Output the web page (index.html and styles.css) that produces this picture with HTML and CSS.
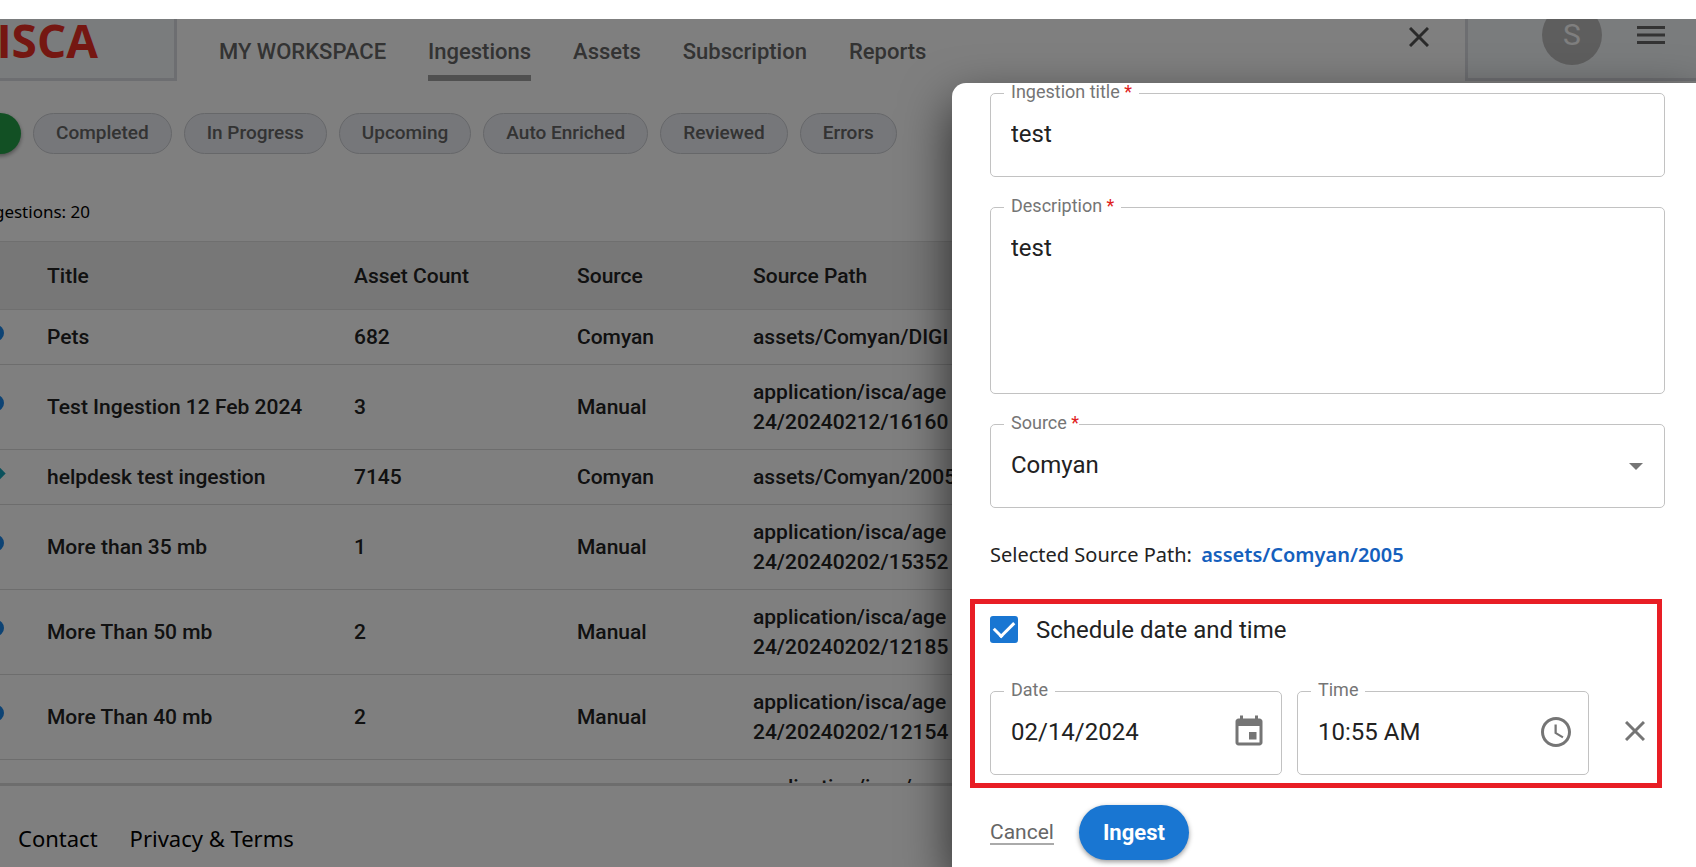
FILE: index.html
```html
<!DOCTYPE html>
<html lang="en">
<head>
<meta charset="utf-8">
<title>ISCA - Ingestions</title>
<link rel="stylesheet" href="styles.css">
</head>
<body>
<div class="app">
  <header class="topbar">
    <a class="logo" href="#">ISCA</a>
    <nav class="nav">
      <a href="#">MY WORKSPACE</a>
      <a href="#" class="active">Ingestions</a>
      <a href="#">Assets</a>
      <a href="#">Subscription</a>
      <a href="#">Reports</a>
    </nav>
    <button class="icon-btn close-search" aria-label="Close">
      <svg width="20" height="20" viewBox="0 0 20 20"><path d="M1 1L19 19M19 1L1 19" stroke="currentColor" stroke-width="3" fill="none"/></svg>
    </button>
    <div class="account">
      <span class="avatar">S</span>
      <button class="icon-btn" aria-label="Menu">
        <svg width="28" height="18" viewBox="0 0 28 18"><path d="M0 1.5H28M0 9H28M0 16.5H28" stroke="currentColor" stroke-width="3"/></svg>
      </button>
    </div>
  </header>

  <main class="content">
    <div class="chips">
      <button class="chip chip-all" aria-label="All"></button>
      <button class="chip">Completed</button>
      <button class="chip">In Progress</button>
      <button class="chip">Upcoming</button>
      <button class="chip">Auto Enriched</button>
      <button class="chip">Reviewed</button>
      <button class="chip">Errors</button>
    </div>
    <p class="total"><span>Ingestions: 20</span></p>
    <div class="table-wrap">
      <table class="grid">
        <colgroup><col class="c-icon"><col class="c-title"><col class="c-count"><col class="c-source"><col></colgroup>
        <thead>
          <tr><th></th><th>Title</th><th>Asset Count</th><th>Source</th><th>Source Path</th></tr>
        </thead>
        <tbody>
          <tr><td><i class="dot"></i></td><td>Pets</td><td>682</td><td>Comyan</td><td>assets/Comyan/DIGI</td></tr>
          <tr><td><i class="dot"></i></td><td>Test Ingestion 12 Feb 2024</td><td>3</td><td>Manual</td><td>application/isca/age<br>24/20240212/16160</td></tr>
          <tr><td><i class="diamond"></i></td><td>helpdesk test ingestion</td><td>7145</td><td>Comyan</td><td>assets/Comyan/2005</td></tr>
          <tr><td><i class="dot"></i></td><td>More than 35 mb</td><td>1</td><td>Manual</td><td>application/isca/age<br>24/20240202/15352</td></tr>
          <tr><td><i class="dot"></i></td><td>More Than 50 mb</td><td>2</td><td>Manual</td><td>application/isca/age<br>24/20240202/12185</td></tr>
          <tr><td><i class="dot"></i></td><td>More Than 40 mb</td><td>2</td><td>Manual</td><td>application/isca/age<br>24/20240202/12154</td></tr>
          <tr><td></td><td></td><td></td><td></td><td>application/isca/age</td></tr>
        </tbody>
      </table>
    </div>
  </main>

  <footer class="footer">
    <a href="#">Contact</a>
    <a href="#">Privacy &amp; Terms</a>
  </footer>

  <div class="backdrop"></div>

  <form class="drawer">
    <fieldset class="field">
      <legend><label for="title">Ingestion title <b>*</b></label></legend>
      <input id="title" type="text" value="test">
    </fieldset>
    <fieldset class="field">
      <legend><label for="desc">Description <b>*</b></label></legend>
      <textarea id="desc">test</textarea>
    </fieldset>
    <fieldset class="field field-select">
      <legend><label for="source">Source <b>*</b></label></legend>
      <select id="source"><option>Comyan</option></select>
      <svg class="caret" width="14" height="7" viewBox="0 0 14 7"><path d="M0 0H14L7 7Z" fill="currentColor"/></svg>
    </fieldset>
    <p class="path">Selected Source Path: <a href="#">assets/Comyan/2005</a></p>

    <section class="schedule">
      <label class="check"><input type="checkbox" checked>Schedule date and time</label>
      <div class="when">
        <fieldset class="field">
          <legend><label for="date">Date</label></legend>
          <input id="date" type="text" value="02/14/2024">
          <button type="button" class="icon-btn" aria-label="Choose date">
            <svg width="36" height="36" viewBox="0 0 24 24"><path fill="currentColor" d="M17 12h-5v5h5v-5zM16 1v2H8V1H6v2H5c-1.11 0-1.99.9-1.99 2L3 19c0 1.1.89 2 2 2h14c1.1 0 2-.9 2-2V5c0-1.1-.9-2-2-2h-1V1h-2zm3 18H5V8h14v11z"/></svg>
          </button>
        </fieldset>
        <fieldset class="field">
          <legend><label for="time">Time</label></legend>
          <input id="time" type="text" value="10:55 AM">
          <button type="button" class="icon-btn" aria-label="Choose time">
            <svg width="36" height="36" viewBox="0 0 24 24"><path fill="currentColor" d="M11.99 2C6.47 2 2 6.48 2 12s4.47 10 9.99 10C17.52 22 22 17.52 22 12S17.52 2 11.99 2zM12 20c-4.42 0-8-3.58-8-8s3.58-8 8-8 8 3.58 8 8-3.58 8-8 8zM12.5 7H11v6l5.25 3.15.75-1.23-4.5-2.67z"/></svg>
          </button>
        </fieldset>
        <button type="button" class="icon-btn" aria-label="Clear schedule">
          <svg width="20" height="20" viewBox="0 0 20 20"><path d="M1 1L19 19M19 1L1 19" stroke="currentColor" stroke-width="3" fill="none"/></svg>
        </button>
      </div>
    </section>

    <div class="actions">
      <a href="#" class="cancel">Cancel</a>
      <button type="button" class="primary">Ingest</button>
    </div>
  </form>
</div>
</body>
</html>
```
FILE: styles.css
```css
* { box-sizing: border-box; }

body {
  margin: 0;
  padding-top: 19px;
  height: 100vh;
  background: #fff;
  color: #222;
  font-family: Roboto, "Liberation Sans", sans-serif;
  overflow: hidden;
}

a { color: inherit; text-decoration: none; }

button, input, textarea, select { font: inherit; color: inherit; }

.app {
  position: relative;
  display: flex;
  flex-direction: column;
  height: 100%;
  overflow: hidden;
}

.icon-btn {
  display: flex;
  padding: 0;
  border: 0;
  background: none;
  color: #757575;
}

/* Top bar */
.topbar {
  display: flex;
  height: 62px;
}

.logo {
  display: flex;
  justify-content: flex-end;
  width: 177px;
  padding-right: 76px;
  border-right: 3px solid #dadde2;
  border-bottom: 3px solid #dadde2;
  background: #f5f8fb;
  color: #ea2e24;
  font: 700 46px/42px "Open Sans", sans-serif;
}

.nav {
  display: flex;
  flex: 1;
  gap: 42px;
  padding-left: 42px;
  color: #666;
  font-size: 22px;
  font-weight: 500;
  line-height: 66px;
}

.nav .active { border-bottom: 6px solid #a0a0a0; }

.close-search {
  padding: 8px 36px 0 0;
  color: #555;
}

.account {
  display: flex;
  justify-content: flex-end;
  gap: 35px;
  width: 231px;
  padding-right: 31px;
  border-left: 3px solid #dadde2;
  border-bottom: 3px solid #dadde2;
  background: #f5f8fb;
}

.avatar {
  width: 60px;
  height: 60px;
  margin-top: -14px;
  border-radius: 50%;
  background: #bdbdbd;
  color: #fff;
  font-size: 30px;
  line-height: 60px;
  text-align: center;
}

.account .icon-btn {
  padding-top: 7px;
  color: #666;
}

/* Ingestion list */
.content {
  display: flex;
  flex: 1;
  flex-direction: column;
  min-height: 0;
}

.chips {
  display: flex;
  gap: 12px;
  padding-top: 32px;
}

.chip {
  height: 41px;
  padding: 0 22px 2px;
  border: 1px solid #ccced3;
  border-radius: 21px;
  background: #eceef4;
  color: #666;
  font-size: 19px;
  font-weight: 500;
}

.chip-all {
  width: 60px;
  margin-left: -39px;
  border: 0;
  background: #24a148;
  box-shadow: 0 2px 4px #0006;
}

.total {
  display: flex;
  justify-content: flex-end;
  width: 90px;
  margin: 46px 0 17px;
  color: #000;
  font: 17px/24px "Noto Sans", sans-serif;
  white-space: nowrap;
}

.table-wrap {
  flex: 1;
  min-height: 0;
  overflow: hidden;
}

.grid {
  width: 100%;
  border-collapse: collapse;
  table-layout: fixed;
  font-size: 21px;
  font-weight: 500;
  line-height: 30px;
}

.c-icon { width: 47px; }
.c-title { width: 307px; }
.c-count { width: 223px; }
.c-source { width: 176px; }

.grid th {
  padding: 19px 0 18px;
  border: solid #dedede;
  border-width: 1px 0;
  background: #eee;
  font-weight: 500;
  text-align: left;
}

.grid td {
  height: 55px;
  padding: 12px 0;
  border-bottom: 1px solid #dadada;
}

.dot {
  display: block;
  width: 16px;
  height: 16px;
  margin: -8px 0 0 -12px;
  border-radius: 50%;
  background: #1a86e8;
}

.diamond {
  display: block;
  width: 13px;
  height: 13px;
  margin: -8px 0 0 -10px;
  background: #17a2b8;
  transform: rotate(45deg);
}

.footer {
  display: flex;
  gap: 32px;
  height: 84px;
  padding: 24px 18px 0;
  border-top: 3px solid #dadada;
  color: #000;
  font: 22px/56px "Noto Sans", sans-serif;
}

.backdrop {
  position: absolute;
  inset: 0;
  background: rgba(0, 0, 0, .5);
}

/* Side drawer over the list */
.drawer {
  position: absolute;
  top: 64px;
  right: 0;
  bottom: 0;
  width: 744px;
  padding: 0 31px 0 38px;
  border-radius: 14px 0 0 0;
  background: #fff;
  box-shadow: 0 20px 50px #000a;
  overflow: hidden;
}

.field {
  position: relative;
  display: flex;
  min-width: 0;
  margin: 0 0 20px;
  padding: 0 20px;
  border: 1px solid #c2c2c2;
  border-radius: 5px;
}

.field legend {
  height: 20px;
  margin-left: -7px;
  padding: 0 7px;
  color: #757575;
  font-size: 18px;
  line-height: 18px;
}

.field-select legend { padding-right: 0; }

.field b {
  color: #e02020;
  font-weight: 400;
}

.field input, .field textarea, .field select {
  display: block;
  flex: 1;
  width: 100%;
  min-width: 0;
  height: 73px;
  padding: 0 0 11px;
  border: 0;
  outline: 0;
  background: none;
  font-size: 24px;
}

.field textarea {
  height: 176px;
  padding: 15px 0 0;
  line-height: 32px;
  resize: none;
}

.field select { appearance: none; }

.caret {
  position: absolute;
  top: 29px;
  right: 21px;
  color: #757575;
}

.path {
  margin: 0 0 17px;
  font: 20px/54px "Noto Sans", sans-serif;
}

.path a {
  margin-left: 4px;
  color: #1560bd;
  font-weight: 600;
}

.schedule {
  margin: 0 3px 17px -20px;
  padding: 12px 12px 8px 15px;
  border: 5px solid #e81e25;
}

.check {
  display: flex;
  align-items: center;
  gap: 18px;
  height: 27px;
  font-size: 24px;
}

.check input {
  display: grid;
  place-items: center;
  width: 28px;
  height: 27px;
  margin: 0;
  border-radius: 3px;
  appearance: none;
  background: #1976d2;
}

.check input::after {
  content: "";
  width: 9px;
  height: 17px;
  margin-top: -5px;
  border: solid #fff;
  border-width: 0 3px 3px 0;
  transform: rotate(45deg);
}

.when {
  display: grid;
  grid-template-columns: 1fr 1fr 41px;
  column-gap: 15px;
  margin-top: 38px;
}

.when .field { margin-bottom: 0; padding-right: 14px; }

.when .field .icon-btn {
  align-items: center;
  height: 62px;
}

.when > .icon-btn {
  align-items: center;
  justify-content: flex-end;
  padding: 6px 0 0;
}

.actions {
  display: flex;
  align-items: center;
  gap: 25px;
}

.cancel {
  border-bottom: 2px solid #aaa;
  color: #666;
  font-size: 21px;
  line-height: 22px;
}

.primary {
  height: 55px;
  padding: 0 24px;
  border: 0;
  border-radius: 28px;
  background: #1976d2;
  box-shadow: 0 2px 5px #0006;
  color: #fff;
  font-size: 22px;
  font-weight: 700;
}
```
